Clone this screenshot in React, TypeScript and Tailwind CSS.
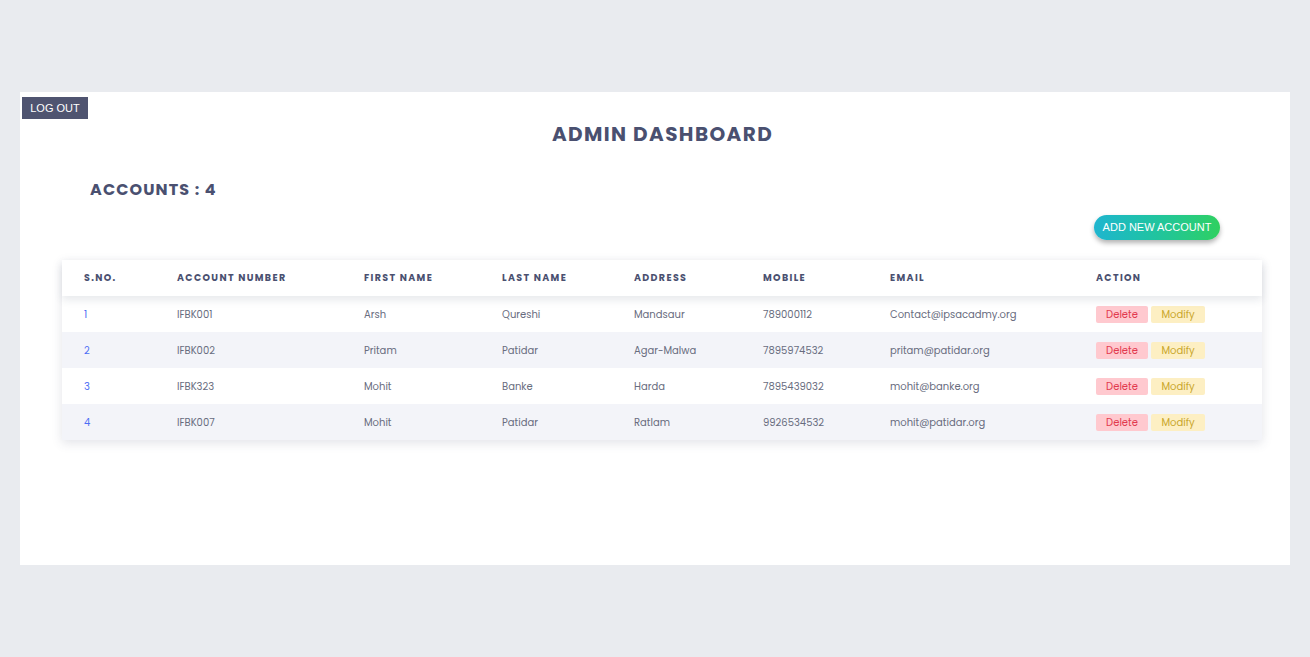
const rows = [
    { sno: 1, acc: "IFBK001", first: "Arsh", last: "Qureshi", addr: "Mandsaur", mobile: "789000112", email: "Contact@ipsacadmy.org" },
    { sno: 2, acc: "IFBK002", first: "Pritam", last: "Patidar", addr: "Agar-Malwa", mobile: "7895974532", email: "pritam@patidar.org" },
    { sno: 3, acc: "IFBK323", first: "Mohit", last: "Banke", addr: "Harda", mobile: "7895439032", email: "mohit@banke.org" },
    { sno: 4, acc: "IFBK007", first: "Mohit", last: "Patidar", addr: "Ratlam", mobile: "9926534532", email: "mohit@patidar.org" },
];

const cols = [
    { label: "S.NO.", w: "w-[93px]" },
    { label: "ACCOUNT NUMBER", w: "w-[187px]" },
    { label: "FIRST NAME", w: "w-[138px]" },
    { label: "LAST NAME", w: "w-[132px]" },
    { label: "ADDRESS", w: "w-[129px]" },
    { label: "MOBILE", w: "w-[127px]" },
    { label: "EMAIL", w: "w-[206px]" },
    { label: "ACTION", w: "" },
];

export default function App() {
    return (
        <div className="min-h-[657px] bg-[#e9ebef] pt-[92px] px-5 font-['Poppins','Noto_Sans',sans-serif]">
            <div className="h-[473px] bg-white pt-[5px]">
                <button className="block ml-[2px] h-[22px] w-[66px] bg-[#4f5470] text-[11px] text-white font-['Liberation_Sans',sans-serif]">
                    LOG OUT
                </button>

                <h1 className="mt-[2px] pl-[15px] text-center text-[20px] font-bold tracking-[1.4px] text-[#4a5070] leading-[26px]">
                    ADMIN DASHBOARD
                </h1>

                <h2 className="mt-[33px] ml-[70px] text-[16px] font-bold tracking-[1.1px] text-[#4a5070] leading-[20px]">
                    ACCOUNTS : 4
                </h2>

                <div className="mt-[15px] flex justify-end pr-[70px]">
                    <button className="h-[25px] w-[126px] rounded-full bg-gradient-to-r from-[#20b5cf] to-[#2fd05f] text-[11px] text-white shadow-[0_3px_5px_rgba(0,0,0,0.3)] font-['Liberation_Sans',sans-serif]">
                        ADD NEW ACCOUNT
                    </button>
                </div>

                <div className="mt-[20px] ml-[42px] mr-[28px] shadow-[0_3px_10px_rgba(60,70,100,0.15)]">
                    <table className="w-full border-collapse text-left">
                        <thead>
                            <tr className="h-[36px] shadow-[0_4px_8px_rgba(60,70,100,0.12)] relative">
                                {cols.map((c) => (
                                    <th
                                        key={c.label}
                                        className={`${c.w} pl-[22px] pt-[1px] text-[9.5px] font-bold tracking-[1.35px] text-[#4a5070]`}
                                    >
                                        {c.label}
                                    </th>
                                ))}
                            </tr>
                        </thead>
                        <tbody className="text-[10px] text-[#686c7e]">
                            {rows.map((r, i) => (
                                <tr key={r.sno} className={`h-[36px] ${i % 2 === 1 ? "bg-[#f3f4f9]" : "bg-white"}`}>
                                    <td className="pl-[22px] pt-[1px] text-[#4c6ef5]">{r.sno}</td>
                                    <td className="pl-[22px] pt-[1px]">{r.acc}</td>
                                    <td className="pl-[22px] pt-[1px]">{r.first}</td>
                                    <td className="pl-[22px] pt-[1px]">{r.last}</td>
                                    <td className="pl-[22px] pt-[1px]">{r.addr}</td>
                                    <td className="pl-[22px] pt-[1px]">{r.mobile}</td>
                                    <td className="pl-[22px] pt-[1px]">{r.email}</td>
                                    <td className="pl-[22px] pt-[1px]">
                                        <div className="flex gap-[3px]">
                                            <span className="flex h-[17px] w-[52px] items-center justify-center rounded-[2px] bg-[#ffc9cf] text-[#e23a4e]">
                                                Delete
                                            </span>
                                            <span className="flex h-[17px] w-[54px] items-center justify-center rounded-[2px] bg-[#fdefc3] text-[#c9a62a]">
                                                Modify
                                            </span>
                                        </div>
                                    </td>
                                </tr>
                            ))}
                        </tbody>
                    </table>
                </div>
            </div>
        </div>
    );
}
